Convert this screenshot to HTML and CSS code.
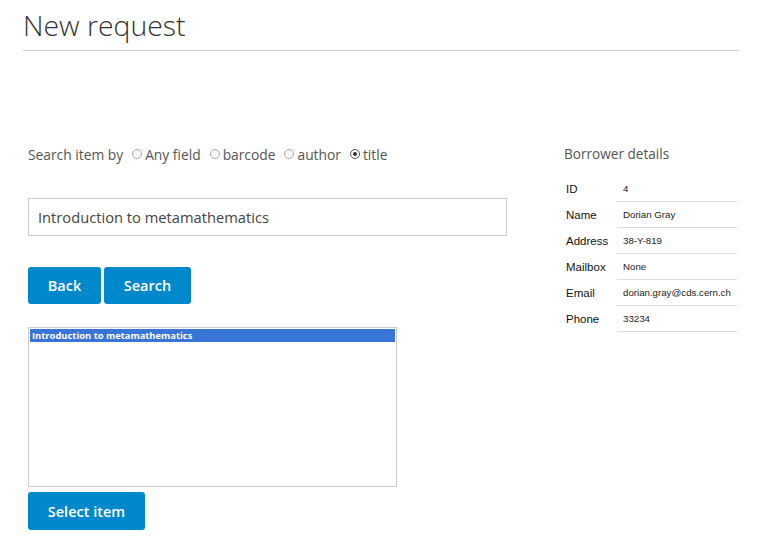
FILE: index.html
```html
<!DOCTYPE html>
<html>
<head>
<meta charset="utf-8">
<link rel="stylesheet" href="styles.css">
</head>
<body>
<div class="page">
  <h1 class="title">New request</h1>
  <div class="content">
    <div class="left">
      <div class="search-by">
        <span class="label">Search item by</span>
        <label class="opt"><span class="radio"></span>Any field</label>
        <label class="opt"><span class="radio"></span>barcode</label>
        <label class="opt"><span class="radio"></span>author</label>
        <label class="opt"><span class="radio checked"></span>title</label>
      </div>
      <div class="input">Introduction to metamathematics</div>
      <div class="buttons">
        <button class="btn btn-back">Back</button>
        <button class="btn btn-search">Search</button>
      </div>
      <div class="listbox">
        <div class="list-item selected">Introduction to metamathematics</div>
      </div>
      <button class="btn btn-select">Select item</button>
    </div>
    <div class="right">
      <div class="bd-title">Borrower details</div>
      <table class="details">
        <tr><th>ID</th><td>4</td></tr>
        <tr><th>Name</th><td>Dorian Gray</td></tr>
        <tr><th>Address</th><td>38-Y-819</td></tr>
        <tr><th>Mailbox</th><td>None</td></tr>
        <tr><th>Email</th><td>dorian.gray@cds.cern.ch</td></tr>
        <tr><th>Phone</th><td>33234</td></tr>
      </table>
    </div>
  </div>
</div>
</body>
</html>
```
FILE: styles.css
```css
html, body {
  margin: 0;
  padding: 0;
  background: #fff;
}
body {
  font-family: "Open Sans", "Liberation Sans", sans-serif;
  color: #555;
}
.page {
  width: 716px;
  margin-left: 23px;
}
.title {
  margin: 0;
  padding-top: 7px;
  font-size: 28.4px;
  font-weight: 300;
  line-height: 36px;
  color: #333;
  padding-bottom: 7px;
  border-bottom: 1px solid #ccc;
}
.content {
  display: flex;
  padding-left: 5px;
  padding-top: 93px;
}
.left {
  width: 479px;
}
.right {
  margin-left: 57px;
  flex: 1;
}
.search-by {
  display: flex;
  align-items: center;
  font-size: 13.8px;
  height: 20px;
  color: #555;
}
.label {
  margin-right: 9px;
}
.opt {
  display: flex;
  align-items: center;
  margin-right: 9px;
}
.radio {
  width: 8px;
  height: 8px;
  border: 1px solid #aaa;
  border-radius: 50%;
  margin-right: 3px;
  box-sizing: content-box;
  background: #fafafa;
  position: relative;
}
.radio.checked {
  border-color: #555;
}
.radio.checked::after {
  content: "";
  position: absolute;
  left: 2px;
  top: 2px;
  width: 4px;
  height: 4px;
  border-radius: 50%;
  background: #333;
}
.input {
  margin-top: 34px;
  height: 36px;
  border: 1px solid #ccc;
  box-sizing: content-box;
  padding-left: 9px;
  font-size: 14.7px;
  line-height: 36px;
  color: #444;
}
.buttons {
  display: flex;
  gap: 3px;
  margin-top: 31px;
}
.btn {
  background: #0088cc;
  color: #fff;
  border: none;
  border-radius: 3px;
  font-family: "Open Sans", "Liberation Sans", sans-serif;
  font-weight: 600;
  font-size: 14.5px;
  height: 37px;
  padding: 0;
  cursor: pointer;
}
.btn-back {
  width: 73px;
}
.btn-search {
  width: 87px;
}
.listbox {
  margin-top: 23px;
  width: 369px;
  height: 160px;
  box-sizing: border-box;
  border: 1px solid #ccc;
  padding: 1px;
}
.list-item {
  font-size: 9.4px;
  line-height: 13px;
  height: 13px;
  padding-left: 2px;
  font-weight: 700;
}
.list-item.selected {
  background: #3875d7;
  color: #fff;
}
.btn-select {
  margin-top: 5px;
  width: 117px;
  height: 38px;
}
.bd-title {
  font-size: 13.6px;
  height: 20px;
  line-height: 20px;
  color: #555;
}
.details {
  margin-top: 11px;
  border-collapse: collapse;
  font-family: "Liberation Sans", Arial, sans-serif;
}
.details th {
  text-align: left;
  font-weight: 400;
  font-size: 11.5px;
  color: #111;
  width: 51px;
  padding: 1px 0 0 2px;
  height: 25px;
}
.details td {
  font-size: 9.7px;
  color: #222;
  width: 114px;
  padding: 1px 0 0 6px;
  height: 24px;
  border-bottom: 1px solid #ddd;
}
```
